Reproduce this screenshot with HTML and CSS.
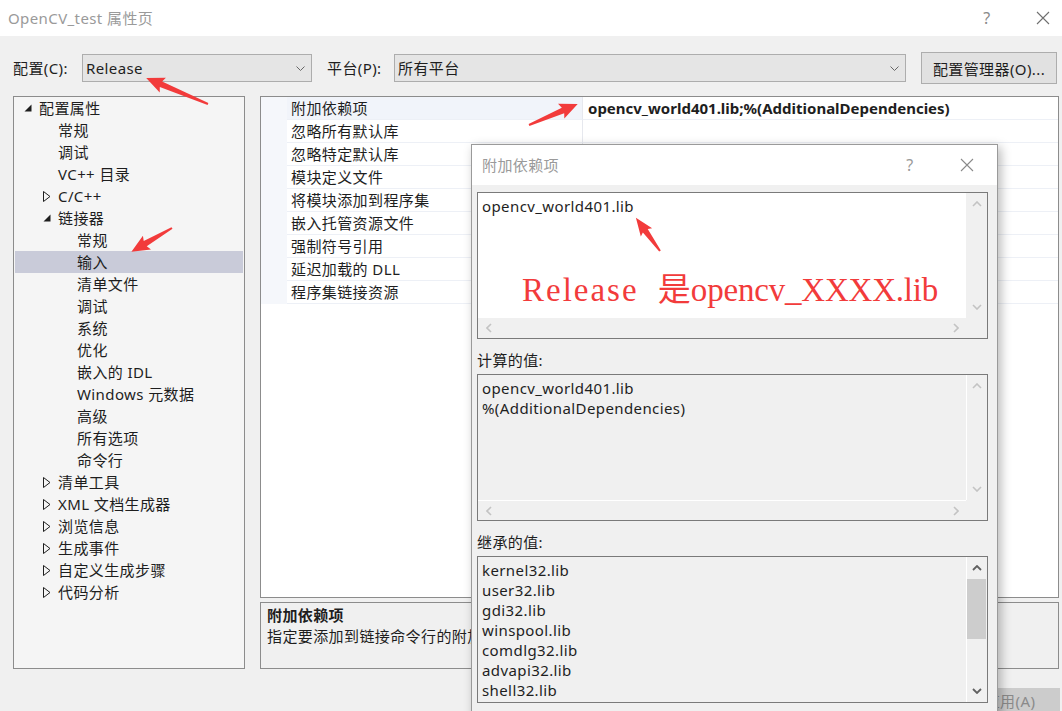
FILE: index.html
```html
<!DOCTYPE html>
<html lang="zh-CN">
<head>
<meta charset="utf-8">
<title>OpenCV_test 属性页</title>
<link rel="stylesheet" href="styles.css">
</head>
<body>
<div class="titlebar">
  <span class="title">OpenCV_test 属性页</span>
  <span class="tb-help">?</span>
  <span class="tb-close"><svg width="14" height="14" viewBox="0 0 14 14"><path d="M1 1 L13 13 M13 1 L1 13" stroke="#6f6f6f" stroke-width="1.1" fill="none"/></svg></span>
</div>

<div class="toolbar">
  <span class="lbl lbl-cfg">配置(C):</span>
  <div class="combo combo-cfg"><span>Release</span><svg class="chev" width="9" height="5" viewBox="0 0 9 5"><path d="M0.5 0.5 L4.5 4.5 L8.5 0.5" fill="none" stroke="#666" stroke-width="1"/></svg></div>
  <span class="lbl lbl-plat">平台(P):</span>
  <div class="combo combo-plat"><span>所有平台</span><svg class="chev" width="9" height="5" viewBox="0 0 9 5"><path d="M0.5 0.5 L4.5 4.5 L8.5 0.5" fill="none" stroke="#666" stroke-width="1"/></svg></div>
  <button class="btn-mgr">配置管理器(O)...</button>
</div>

<div class="main">
  <div class="tree">
    <div class="row"><span class="tw"><svg width="8" height="8" viewBox="0 0 8 8"><path d="M7.5 0.5 L7.5 7.5 L0.5 7.5 Z" fill="#1e1e1e"/></svg></span>配置属性</div>
    <div class="row l1"><span class="tw"></span>常规</div>
    <div class="row l1"><span class="tw"></span>调试</div>
    <div class="row l1"><span class="tw"></span>VC++ 目录</div>
    <div class="row l1"><span class="tw"><svg width="8" height="11" viewBox="0 0 8 11"><path d="M0.5 0.5 L7 5.5 L0.5 10.5 Z" fill="none" stroke="#1e1e1e" stroke-width="1"/></svg></span>C/C++</div>
    <div class="row l1"><span class="tw"><svg width="8" height="8" viewBox="0 0 8 8"><path d="M7.5 0.5 L7.5 7.5 L0.5 7.5 Z" fill="#1e1e1e"/></svg></span>链接器</div>
    <div class="row l2"><span class="tw"></span>常规</div>
    <div class="row l2 sel"><span class="tw"></span>输入</div>
    <div class="row l2"><span class="tw"></span>清单文件</div>
    <div class="row l2"><span class="tw"></span>调试</div>
    <div class="row l2"><span class="tw"></span>系统</div>
    <div class="row l2"><span class="tw"></span>优化</div>
    <div class="row l2"><span class="tw"></span>嵌入的 IDL</div>
    <div class="row l2"><span class="tw"></span>Windows 元数据</div>
    <div class="row l2"><span class="tw"></span>高级</div>
    <div class="row l2"><span class="tw"></span>所有选项</div>
    <div class="row l2"><span class="tw"></span>命令行</div>
    <div class="row l1"><span class="tw"><svg width="8" height="11" viewBox="0 0 8 11"><path d="M0.5 0.5 L7 5.5 L0.5 10.5 Z" fill="none" stroke="#1e1e1e" stroke-width="1"/></svg></span>清单工具</div>
    <div class="row l1"><span class="tw"><svg width="8" height="11" viewBox="0 0 8 11"><path d="M0.5 0.5 L7 5.5 L0.5 10.5 Z" fill="none" stroke="#1e1e1e" stroke-width="1"/></svg></span>XML 文档生成器</div>
    <div class="row l1"><span class="tw"><svg width="8" height="11" viewBox="0 0 8 11"><path d="M0.5 0.5 L7 5.5 L0.5 10.5 Z" fill="none" stroke="#1e1e1e" stroke-width="1"/></svg></span>浏览信息</div>
    <div class="row l1"><span class="tw"><svg width="8" height="11" viewBox="0 0 8 11"><path d="M0.5 0.5 L7 5.5 L0.5 10.5 Z" fill="none" stroke="#1e1e1e" stroke-width="1"/></svg></span>生成事件</div>
    <div class="row l1"><span class="tw"><svg width="8" height="11" viewBox="0 0 8 11"><path d="M0.5 0.5 L7 5.5 L0.5 10.5 Z" fill="none" stroke="#1e1e1e" stroke-width="1"/></svg></span>自定义生成步骤</div>
    <div class="row l1"><span class="tw"><svg width="8" height="11" viewBox="0 0 8 11"><path d="M0.5 0.5 L7 5.5 L0.5 10.5 Z" fill="none" stroke="#1e1e1e" stroke-width="1"/></svg></span>代码分析</div>
  </div>

  <div class="right">
    <div class="grid">
      <div class="prow first"><span class="gut"></span><span class="pname">附加依赖项</span><span class="pval">opencv_world401.lib;%(AdditionalDependencies)</span></div>
      <div class="prow"><span class="gut"></span><span class="pname">忽略所有默认库</span><span class="pval"></span></div>
      <div class="prow"><span class="gut"></span><span class="pname">忽略特定默认库</span><span class="pval"></span></div>
      <div class="prow"><span class="gut"></span><span class="pname">模块定义文件</span><span class="pval"></span></div>
      <div class="prow"><span class="gut"></span><span class="pname">将模块添加到程序集</span><span class="pval"></span></div>
      <div class="prow"><span class="gut"></span><span class="pname">嵌入托管资源文件</span><span class="pval"></span></div>
      <div class="prow"><span class="gut"></span><span class="pname">强制符号引用</span><span class="pval"></span></div>
      <div class="prow"><span class="gut"></span><span class="pname">延迟加载的 DLL</span><span class="pval"></span></div>
      <div class="prow"><span class="gut"></span><span class="pname">程序集链接资源</span><span class="pval"></span></div>
    </div>
    <div class="desc">
      <div class="desc-title">附加依赖项</div>
      <div class="desc-text">指定要添加到链接命令行的附加项。</div>
    </div>
  </div>
</div>

<div class="footer"><button class="btn-apply">应用(A)</button></div>

<div class="dialog">
  <div class="dlg-title">
    <span class="t">附加依赖项</span>
    <span class="dlg-help">?</span>
    <span class="dlg-close"><svg width="14" height="14" viewBox="0 0 14 14"><path d="M1 1 L13 13 M13 1 L1 13" stroke="#8a8a8a" stroke-width="1.1" fill="none"/></svg></span>
  </div>
  <div class="dlg-body">
    <div class="ebox ebox-edit">
      <div class="etext">opencv_world401.lib</div>
      <div class="vs light">
        <span class="sa"><svg width="10" height="6" viewBox="0 0 10 6"><path d="M1 5 L5 1 L9 5" fill="none" stroke="currentColor" stroke-width="1.6"/></svg></span>
        <span class="sa"><svg width="10" height="6" viewBox="0 0 10 6"><path d="M1 1 L5 5 L9 1" fill="none" stroke="currentColor" stroke-width="1.6"/></svg></span>
      </div>
      <div class="hs light">
        <span class="sa"><svg width="6" height="10" viewBox="0 0 6 10"><path d="M5 1 L1 5 L5 9" fill="none" stroke="currentColor" stroke-width="1.6"/></svg></span>
        <span class="sa"><svg width="6" height="10" viewBox="0 0 6 10"><path d="M1 1 L5 5 L1 9" fill="none" stroke="currentColor" stroke-width="1.6"/></svg></span>
      </div>
      <div class="corner"></div>
      <div class="note"><span class="w1">Release</span> 是<span class="w2">opencv_XXXX.lib</span></div>
    </div>

    <div class="dlabel">计算的值:</div>
    <div class="ebox ebox-ro">
      <div class="etext">opencv_world401.lib<br>%(AdditionalDependencies)</div>
      <div class="vs light">
        <span class="sa"><svg width="10" height="6" viewBox="0 0 10 6"><path d="M1 5 L5 1 L9 5" fill="none" stroke="currentColor" stroke-width="1.6"/></svg></span>
        <span class="sa"><svg width="10" height="6" viewBox="0 0 10 6"><path d="M1 1 L5 5 L9 1" fill="none" stroke="currentColor" stroke-width="1.6"/></svg></span>
      </div>
      <div class="hs light">
        <span class="sa"><svg width="6" height="10" viewBox="0 0 6 10"><path d="M5 1 L1 5 L5 9" fill="none" stroke="currentColor" stroke-width="1.6"/></svg></span>
        <span class="sa"><svg width="6" height="10" viewBox="0 0 6 10"><path d="M1 1 L5 5 L1 9" fill="none" stroke="currentColor" stroke-width="1.6"/></svg></span>
      </div>
      <div class="corner"></div>
    </div>

    <div class="dlabel">继承的值:</div>
    <div class="ebox ebox-inh">
      <div class="etext">kernel32.lib<br>user32.lib<br>gdi32.lib<br>winspool.lib<br>comdlg32.lib<br>advapi32.lib<br>shell32.lib</div>
      <div class="vs dark">
        <span class="sa"><svg width="10" height="6" viewBox="0 0 10 6"><path d="M1 5 L5 1 L9 5" fill="none" stroke="currentColor" stroke-width="1.8"/></svg></span>
        <span class="thumb"></span>
        <span class="sa"><svg width="10" height="6" viewBox="0 0 10 6"><path d="M1 1 L5 5 L9 1" fill="none" stroke="currentColor" stroke-width="1.8"/></svg></span>
      </div>
    </div>
  </div>
</div>

<svg class="annot" width="1062" height="711" viewBox="0 0 1062 711">
  <g fill="#f23b3b">
    <polygon transform="translate(208 104) rotate(202.75)" points="0,-1 51,-3 49,-8 67,0 49,8 51,3 0,1"/>
    <polygon transform="translate(172 228) rotate(149.7)" points="0,-1 31,-3 29,-8 47,0 29,8 31,3 0,1"/>
    <polygon transform="translate(529 125) rotate(-23.2)" points="0,-1 37,-3 35,-8 53,0 35,8 37,3 0,1"/>
    <polygon transform="translate(660 251) rotate(234)" points="0,-1 25,-3 23,-7 41,0 23,7 25,3 0,1"/>
  </g>
</svg>
</body>
</html>
```

FILE: styles.css
```css
* { box-sizing: border-box; }

body {
  margin: 0;
  width: 1062px;
  height: 711px;
  overflow: hidden;
  position: relative;
  background: #f0f0f0;
  font-family: "Noto Sans", "Noto Sans CJK SC", sans-serif;
  font-size: 15px;
  letter-spacing: 0.4px;
  color: #1e1e1e;
}

/* title bar */
.titlebar {
  height: 36px;
  background: #fff;
  display: flex;
  align-items: center;
  padding-left: 8px;
}
.title { flex: 1; color: #9a9a9a; line-height: 20px; }
.tb-help { width: 46px; margin-right: 14px; text-align: center; color: #8a8a8a; font-size: 16px; line-height: 20px; }
.tb-close { width: 38px; display: flex; justify-content: center; }

/* toolbar */
.toolbar {
  display: flex;
  align-items: center;
  height: 32px;
  margin-top: 16px;
  padding-left: 13px;
}
.lbl { line-height: 20px; white-space: nowrap; }
.lbl-cfg { width: 69px; }
.lbl-plat { width: 67px; margin-left: 15px; }
.combo {
  height: 28px;
  border: 1px solid #adadad;
  background: #e5e5e5;
  display: flex;
  align-items: center;
  justify-content: space-between;
  padding: 0 6px 0 3px;
  line-height: 20px;
}
.combo-cfg { width: 230px; }
.combo-plat { width: 512px; }
.btn-mgr {
  margin-left: 15px;
  width: 136px;
  height: 32px;
  border: 1px solid #adadad;
  background: #e1e1e1;
  font: inherit;
  letter-spacing: inherit;
  color: #1e1e1e;
  padding: 0;
}

/* main area */
.main {
  display: flex;
  gap: 15px;
  margin-top: 12px;
  padding-left: 13px;
  height: 573px;
}
.tree {
  width: 232px;
  flex: none;
  border: 1px solid #8c8c8c;
  background: #f5f5f5;
  padding: 0 1px;
}
.row {
  height: 22px;
  display: flex;
  align-items: center;
  line-height: 22px;
  white-space: nowrap;
}
.row.l1 { padding-left: 19px; }
.row.l2 { padding-left: 38px; }
.row.sel { background: #c9cbd9; }
.tw {
  width: 24px;
  height: 22px;
  flex: none;
  display: flex;
  align-items: center;
  padding-left: 9px;
}

.right {
  width: 799px;
  flex: none;
  display: flex;
  flex-direction: column;
  gap: 4px;
}
.grid {
  height: 502px;
  border: 1px solid #8c8c8c;
  background: #fff;
}
.prow { display: flex; height: 23px; }
.gut { width: 26px; flex: none; background: #f5f7fb; }
.pname {
  width: 295px;
  flex: none;
  padding-left: 4px;
  line-height: 22px;
  border-bottom: 1px solid #edf0f6;
  white-space: nowrap;
}
.pval {
  flex: 1;
  padding-left: 5px;
  line-height: 22px;
  border-bottom: 1px solid #edf0f6;
  border-left: 1px solid #e6e8ee;
  white-space: nowrap;
}
.prow.first .pname { background: #f1f4fa; }
.prow.first .pval { font-weight: bold; letter-spacing: 0; }

.desc {
  height: 67px;
  border: 1px solid #8c8c8c;
  background: #f0f0f0;
  padding: 2px 6px;
  line-height: 21px;
  white-space: nowrap;
  overflow: hidden;
}
.desc-title { font-weight: bold; }
.desc-text { width: 204px; overflow: hidden; }

.footer {
  display: flex;
  justify-content: flex-end;
  margin-top: 19px;
  padding-right: 2px;
}
.btn-apply {
  width: 100px;
  height: 24px;
  border: none;
  background: #cccccc;
  color: #8a8a8a;
  font: inherit;
  letter-spacing: inherit;
  padding: 0;
}

/* dialog */
.dialog {
  position: absolute;
  left: 471px;
  top: 144px;
  width: 527px;
  height: 600px;
  background: #f0f0f0;
  border: 1px solid #9a9a9a;
  box-shadow: 3px 3px 10px rgba(0, 0, 0, 0.28);
}
.dlg-title {
  height: 40px;
  background: #fff;
  display: flex;
  align-items: center;
  padding-left: 10px;
}
.dlg-title .t { flex: 1; color: #9a9a9a; line-height: 20px; }
.dlg-help { width: 40px; margin-right: 20px; text-align: center; color: #9a9a9a; font-size: 16px; line-height: 20px; }
.dlg-close { width: 34px; margin-right: 13px; display: flex; justify-content: center; }

.dlg-body { padding: 7px 0 0 5px; }

.ebox {
  position: relative;
  width: 511px;
  height: 147px;
  border: 1px solid #7a7a7a;
  display: grid;
  grid-template-columns: 1fr 21px;
  grid-template-rows: 1fr 20px;
}
.ebox-inh { grid-template-rows: 1fr; }
.etext {
  padding: 3px 4px;
  line-height: 20px;
  white-space: nowrap;
  overflow: hidden;
}
.ebox-edit .etext { background: #fff; }

.vs {
  display: flex;
  flex-direction: column;
  align-items: center;
}
.hs {
  display: flex;
  align-items: center;
}
.sa {
  display: flex;
  align-items: center;
  justify-content: center;
  width: 21px;
  height: 22px;
  flex: none;
}
.vs .sa:last-child { margin-top: auto; }
.hs .sa { height: 20px; }
.hs .sa:last-child { margin-left: auto; }
.light { color: #c3c3c3; }
.dark { color: #606060; }

.ebox-ro .vs, .ebox-inh .vs { border-left: 1px solid #fff; }
.ebox-ro .hs { border-top: 1px solid #fff; }
.thumb {
  width: 19px;
  height: 60px;
  background: #cdcdcd;
  align-self: flex-start;
}

.dlabel {
  margin-top: 11px;
  margin-bottom: 4px;
  line-height: 20px;
  height: 20px;
}

.note {
  position: absolute;
  left: 44px;
  top: 77px;
  font-family: "Liberation Serif", "Noto Sans CJK SC", serif;
  font-size: 33px;
  line-height: 40px;
  letter-spacing: 0;
  word-spacing: 11px;
  color: #f23b3b;
  white-space: nowrap;
}
.note .w1 { letter-spacing: 2px; }
.note .w2 { letter-spacing: -0.2px; }

.annot {
  position: absolute;
  left: 0;
  top: 0;
  pointer-events: none;
}
```
